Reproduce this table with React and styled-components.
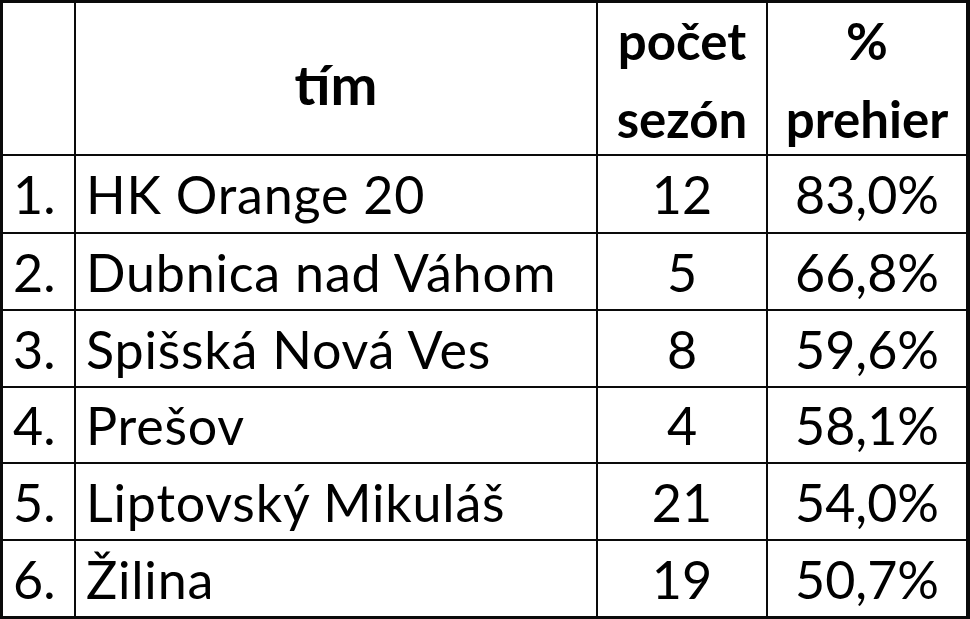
import React from "react";
import styled, { createGlobalStyle } from "styled-components";

const GlobalStyle = createGlobalStyle`
  html, body {
    margin: 0;
    padding: 0;
    background: #ffffff;
  }
  body {
    font-family: Lato, "Liberation Sans", sans-serif;
    color: #000000;
  }
`;

const teams = [
  { rank: "1.", name: "HK Orange 20", seasons: 12, losses: "83,0%" },
  { rank: "2.", name: "Dubnica nad Váhom", seasons: 5, losses: "66,8%" },
  { rank: "3.", name: "Spišská Nová Ves", seasons: 8, losses: "59,6%" },
  { rank: "4.", name: "Prešov", seasons: 4, losses: "58,1%" },
  { rank: "5.", name: "Liptovský Mikuláš", seasons: 21, losses: "54,0%" },
  { rank: "6.", name: "Žilina", seasons: 19, losses: "50,7%" },
];

const Sheet = styled.div`
  display: grid;
  grid-template-columns: 71px 520px 168px 198px;
  grid-template-rows: 151px 76px 75px 75px 74px 75px 75px;
  gap: 2px;
  width: 970px;
  height: 619px;
  box-sizing: border-box;
  padding: 3px 4px 4px 3px;
  background: #0a0a0a;
`;

const Cell = styled.div`
  background: #ffffff;
  display: flex;
  align-items: center;
  justify-content: ${(p) => (p.$center ? "center" : "flex-start")};
  padding-left: ${(p) => (p.$center ? "0" : "10px")};
  font-size: 52px;
  line-height: 1;
  white-space: nowrap;
`;

const Name = styled(Cell)`
  letter-spacing: 0.8px;
`;

const HeadCell = styled(Cell)`
  flex-direction: column;
  justify-content: center;
  font-weight: 700;
  font-size: ${(p) => p.$size || 51}px;
  line-height: 78px;
  padding-top: ${(p) => p.$top || 2}px;
`;

export default function App() {
  return (
    <>
      <GlobalStyle />
      <Sheet>
        <Cell />
        <HeadCell $center $size={56} $top={10}>tím</HeadCell>
        <HeadCell $center>
          <span>počet</span>
          <span>sezón</span>
        </HeadCell>
        <HeadCell $center>
          <span>%</span>
          <span>prehier</span>
        </HeadCell>
        {teams.map((t) => (
          <React.Fragment key={t.rank}>
            <Cell>{t.rank}</Cell>
            <Name>{t.name}</Name>
            <Cell $center>{t.seasons}</Cell>
            <Cell $center>{t.losses}</Cell>
          </React.Fragment>
        ))}
      </Sheet>
    </>
  );
}
